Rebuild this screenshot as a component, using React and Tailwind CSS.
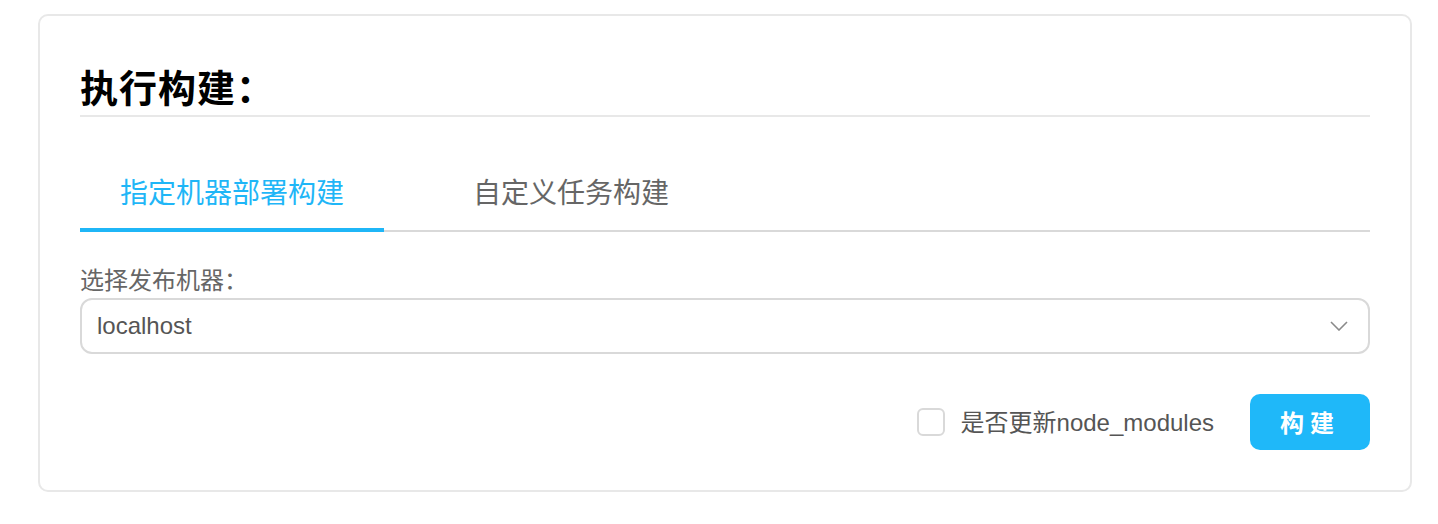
import { useState } from "react";

const cjk = "font-['PingFang_SC','Noto_Sans_CJK_SC','Noto_Sans',sans-serif]";

export default function App() {
  const [tab, setTab] = useState(0);
  const [checked, setChecked] = useState(false);
  const tabs = ["指定机器部署构建", "自定义任务构建"];

  return (
    <div className={`min-h-screen bg-white pt-[14px] pl-[38px] ${cjk}`}>
      <div className="w-[1374px] h-[478px] rounded-[10px] border-2 border-[#e8e8e8] px-[40px] pt-[46px]">
        <h2 className="border-b-2 border-[#e8e8e8] pb-[5px] text-[38px] font-bold leading-[48px] tracking-[1px] text-black">
          执行构建：
        </h2>

        <div className="mt-[54px] flex border-b-2 border-[#d9d9d9]">
          {tabs.map((label, i) => (
            <button
              key={label}
              onClick={() => setTab(i)}
              className={`-mb-[2px] px-[40px] pb-[17px] text-[28px] leading-[40px] ${
                i === 0 ? "mr-[49px]" : ""
              } ${
                tab === i
                  ? "border-b-4 border-[#1fb6f7] text-[#1fb6f7]"
                  : "border-b-4 border-transparent text-[#666]"
              }`}
            >
              {label}
            </button>
          ))}
        </div>

        <div className="mt-[32px] text-[24px] leading-[30px] text-[#666]">选择发布机器：</div>
        <div className="mt-[4px] flex h-[56px] items-center justify-between rounded-[12px] border-2 border-[#d9d9d9] pl-[15px] pr-[20px]">
          <span className="font-['Liberation_Sans',sans-serif] text-[24px] text-[#555]">localhost</span>
          <svg width="18" height="10" viewBox="0 0 18 10" fill="none">
            <path d="M1 1l8 8 8-8" stroke="#8a8a8a" strokeWidth="1.6" />
          </svg>
        </div>

        <div className="mt-[40px] flex items-center justify-end">
          <label className="flex cursor-pointer items-center gap-[16px]" onClick={() => setChecked(!checked)}>
            <span
              className={`h-[28px] w-[28px] rounded-[6px] border-2 ${
                checked ? "border-[#1fb6f7] bg-[#1fb6f7]" : "border-[#d9d9d9] bg-white"
              }`}
            />
            <span className="text-[24px] text-[#555]">
              是否更新<span className="font-['Liberation_Sans',sans-serif]">node_modules</span>
            </span>
          </label>
          <button className="ml-[36px] h-[56px] w-[120px] rounded-[10px] bg-[#1fb8f9] text-[24px] font-bold tracking-[6px] text-white">
            构建
          </button>
        </div>
      </div>
    </div>
  );
}
